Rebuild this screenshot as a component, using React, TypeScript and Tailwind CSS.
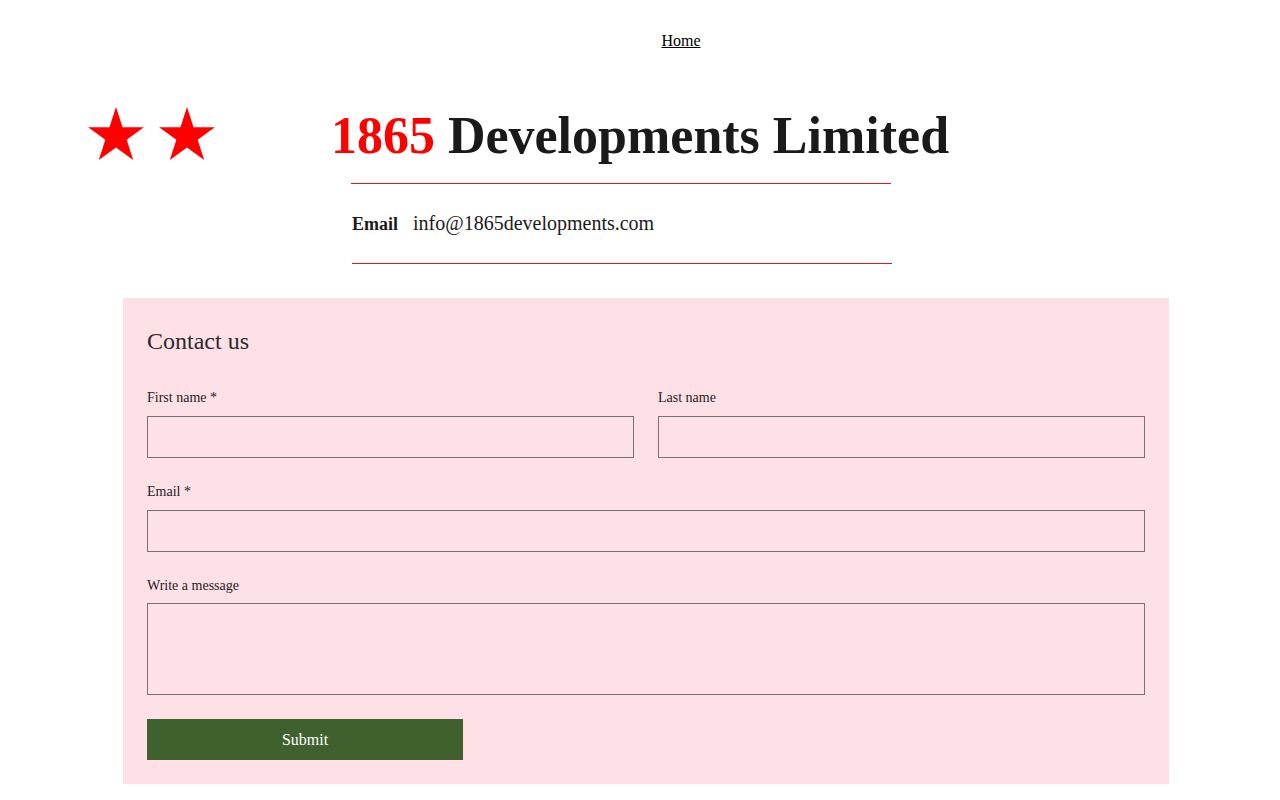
import React from 'react';

function Star() {
  return (
    <svg width="56" height="53" viewBox="2.4 0 95.2 90.5" className="block">
      <polygon
        fill="#ff0000"
        points="50,0 61.2,34.5 97.6,34.5 68.2,55.9 79.4,90.5 50,69.1 20.6,90.5 31.8,55.9 2.4,34.5 38.8,34.5"
      />
    </svg>
  );
}

function Field({ label, className = '' }: { label: string; className?: string }) {
  return (
    <label className={`flex flex-col ${className}`}>
      <span className="text-[14px] leading-[16px] text-[#222]">{label}</span>
      <input
        type="text"
        className="mt-[10px] h-[42px] w-full border border-[#7a726e] bg-transparent px-3 outline-none"
      />
    </label>
  );
}

export default function App() {
  return (
    <div className="min-h-[800px] bg-white font-['Liberation_Serif',serif] text-[#1a1a1a]">
      {/* top nav */}
      <nav className="flex justify-center pt-[32px] pl-[82px]">
        <a href="#" className="text-[16px] leading-[18px] text-black underline">
          Home
        </a>
      </nav>

      {/* heading row */}
      <header className="mt-[56px] grid grid-cols-[1fr_auto_1fr]">
        <div className="flex gap-[15px] pl-[88px] pt-[1px]">
          <Star />
          <Star />
        </div>
        <h1 className="text-[52px] font-bold leading-[60px] whitespace-nowrap">
          <span className="text-[#ff0000]">1865</span> Developments Limited
        </h1>
        <div />
      </header>

      {/* contact strip */}
      <div className="mt-[17px] ml-[351px] w-[541px]">
        <div className="mr-[1px] h-px bg-[#dd1a1a]" />
        <div className="flex items-baseline gap-[15px] pl-[1px] pt-[27px] pb-[28px]">
          <span className="text-[18px] font-bold leading-[22px]">Email</span>
          <span className="text-[20px] leading-[24px]">info@1865developments.com</span>
        </div>
        <div className="ml-[1px] h-px bg-[#dd1a1a]" />
      </div>

      {/* form */}
      <section className="ml-[123px] mt-[34px] w-[1046px] bg-[#fee1e6] px-[24px] pt-[29px] pb-[24px] text-[#222]">
        <h2 className="text-[24px] leading-[28px] text-[#2a2a2a]">Contact us</h2>

        <div className="mt-[35px] grid grid-cols-2 gap-[24px]">
          <Field label="First name *" />
          <Field label="Last name" />
        </div>

        <Field label="Email *" className="mt-[26px]" />

        <label className="mt-[26px] flex flex-col">
          <span className="text-[14px] leading-[16px]">Write a message</span>
          <textarea className="mt-[9px] h-[92px] w-full resize-none border border-[#7a726e] bg-transparent px-3 outline-none" />
        </label>

        <button
          type="button"
          className="mt-[24px] block h-[41px] w-[316px] bg-[#3e612e] text-[16px] text-white"
        >
          Submit
        </button>
      </section>
    </div>
  );
}
